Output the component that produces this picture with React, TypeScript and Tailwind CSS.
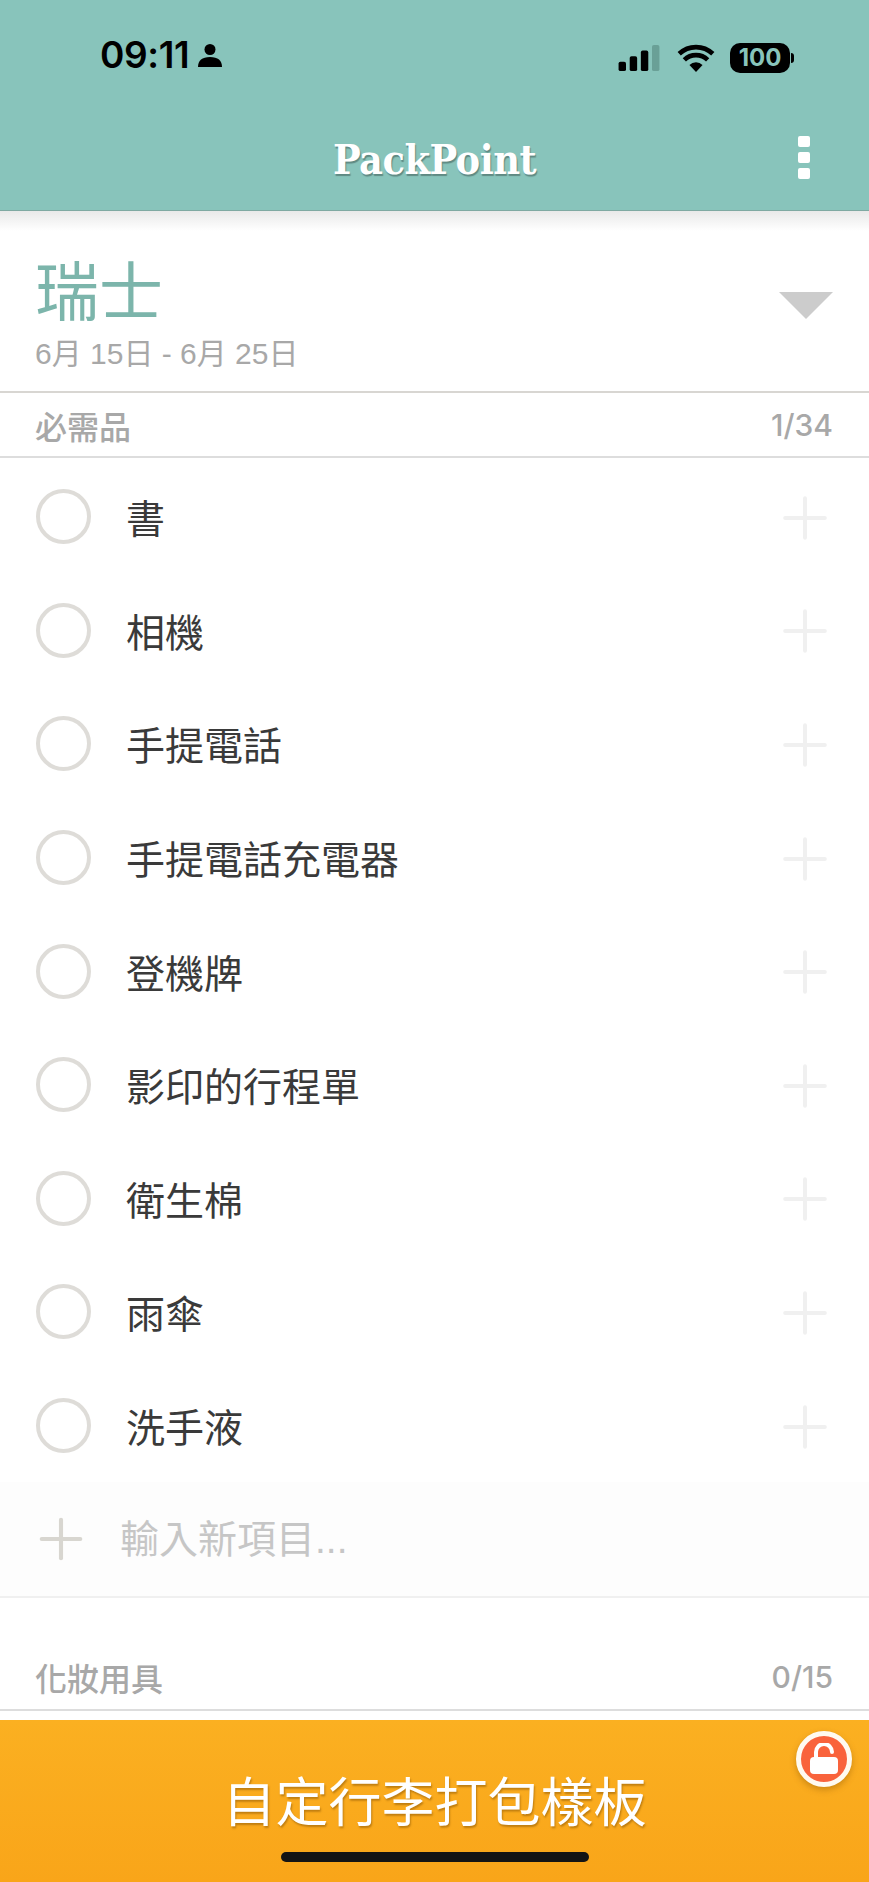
/**
 * PackPoint packing list screen.
 */
import { Plus } from 'lucide-react';

const items = ['書', '相機', '手提電話', '手提電話充電器', '登機牌', '影印的行程單', '衛生棉', '雨傘', '洗手液'];

function StatusBar() {
  return (
    <div className="flex h-[120px] items-end justify-between pb-[47px] pl-[100px] pr-[75px] text-black">
      <div className="flex items-center gap-[9px]">
        <span className="font-['Inter',sans-serif] text-[37px] font-semibold leading-none tracking-[-0.4px]">09:11</span>
        <svg width="24" height="24" viewBox="0 0 24 24" fill="currentColor">
          <circle cx="12" cy="6.500" r="5.500" />
          <path d="M0 24c0-6.500 4-10 12-10s12 3.500 12 10z" />
        </svg>
      </div>
      <div className="flex items-center">
        <svg width="46" height="26" viewBox="0 0 44 28" className="mr-[14px]">
          <rect x="0" y="18" width="8" height="10" rx="2" fill="#000" />
          <rect x="12" y="12" width="8" height="16" rx="2" fill="#000" />
          <rect x="24" y="6" width="8" height="22" rx="2" fill="#000" />
          <rect x="36" y="0" width="8" height="28" rx="2" fill="#6aa097" />
        </svg>
        <svg width="40" height="28" viewBox="0 0 40 30" className="mr-[14px]">
          <path d="M20 30 13 22.500a10 10 0 0 1 14 0z" fill="#000" />
          <path d="M7.500 17a18 18 0 0 1 25 0" fill="none" stroke="#000" strokeWidth="5" />
          <path d="M2 10.500a26 26 0 0 1 36 0" fill="none" stroke="#000" strokeWidth="5" />
        </svg>
        <div className="flex h-[30px] w-[60px] items-center justify-center rounded-[10px] bg-black font-['Inter',sans-serif] text-[24px] font-bold leading-none text-[#88c4bb]">
          100
        </div>
        <div className="ml-[1px] h-[10px] w-[3px] rounded-r-full bg-black" />
      </div>
    </div>
  );
}

function Header() {
  return (
    <header className="relative h-[211px] shrink-0 border-b border-[#7fa9a2] bg-[#88c4bb]">
      <StatusBar />
      <div className="flex items-center justify-center pt-[15px]">
        <span className="font-['DejaVu_Serif_Condensed','DejaVu_Serif',serif] text-[41px] font-bold leading-[50px] tracking-[-0.5px] text-white [font-stretch:condensed] [text-shadow:1px_2px_1px_rgba(0,0,0,0.3)]">
          PackPoint
        </span>
      </div>
      <div className="absolute right-[59px] top-[136px] flex flex-col gap-[5px]">
        <div className="h-[11px] w-[12px] rounded-[2px] bg-white" />
        <div className="h-[11px] w-[12px] rounded-[2px] bg-white" />
        <div className="h-[11px] w-[12px] rounded-[2px] bg-white" />
      </div>
    </header>
  );
}

function SectionHeader({ title, count, className }: { title: string; count: string; className: string }) {
  return (
    <div className={`flex items-center justify-between border-b-2 border-[#dddddd] pl-[35px] pr-[36px] text-[#a8a8a8] ${className}`}>
      <span className="text-[32px] font-medium leading-none">{title}</span>
      <span className="font-['Inter',sans-serif] text-[30px] font-medium leading-none">{count}</span>
    </div>
  );
}

function ItemRow({ label }: { label: string }) {
  return (
    <div className="flex h-[113.6px] items-center pl-[36px] pr-[30px]">
      <div className="h-[55px] w-[55px] shrink-0 rounded-full border-[4px] border-[#dedcd8]" />
      <span className="ml-[35px] flex-1 text-[39px] leading-none text-[#3a3a3a]">{label}</span>
      <Plus className="mt-[2px] h-[68px] w-[68px] shrink-0 text-[#f0f0f0]" strokeWidth={1.4} />
    </div>
  );
}

export default function App() {
  return (
    <div className="relative flex h-[1882px] w-[869px] flex-col overflow-hidden bg-white font-['Noto_Sans_CJK_TC',sans-serif]">
      <Header />
      <main className="flex min-h-0 flex-1 flex-col">
        <div className="h-[20px] bg-gradient-to-b from-[#e9e9e9] to-white" />
        <div className="flex h-[162px] items-start justify-between border-b-2 border-[#d8d6d2] pl-[35px] pr-[36px]">
          <div>
            <h1 className="mt-[21px] text-[64px] leading-[70px] text-[#7cb5ab]">瑞士</h1>
            <p className="mt-[14px] font-['Liberation_Sans','Noto_Sans_CJK_TC',sans-serif] text-[30px] leading-[36px] text-[#a8a8a8]">6月 15日 - 6月 25日</p>
          </div>
          <div className="mt-[61px] h-0 w-0 border-x-[27px] border-t-[27px] border-x-transparent border-t-[#cccccc]" />
        </div>
        <SectionHeader title="必需品" count="1/34" className="h-[65px]" />
        <div className="pt-[2px]">
          {items.map((item) => (
            <ItemRow key={item} label={item} />
          ))}
        </div>
        <div className="flex h-[116px] items-center border-b-2 border-[#f0f0f0] bg-[#fdfdfd] pl-[28px]">
          <Plus className="h-[66px] w-[66px] shrink-0 text-[#d8d6d0]" strokeWidth={1.5} />
          <span className="ml-[26px] font-['Liberation_Sans','Noto_Sans_CJK_TC',sans-serif] text-[39px] leading-none text-[#c6c6c6]">輸入新項目...</span>
        </div>
        <SectionHeader title="化妝用具" count="0/15" className="mt-[53px] h-[60px] pb-[7px]" />
      </main>
      <footer className="flex h-[162px] shrink-0 flex-col items-center bg-gradient-to-b from-[#fbb021] to-[#f9a519]">
        <span className="mt-[46px] text-[53px] leading-[66px] text-white [text-shadow:1px_2px_2px_rgba(120,70,0,0.45)]">
          自定行李打包樣板
        </span>
        <div className="mt-[20px] h-[10px] w-[308px] rounded-full bg-[#141414]" />
      </footer>
      <div className="absolute left-[796px] top-[1731px] flex h-[56px] w-[56px] items-center justify-center rounded-full border-[5px] border-[#fffaf0] bg-[#f9633c] shadow-[0_3px_6px_rgba(120,70,0,0.35)]">
        <svg width="30" height="32" viewBox="0 0 30 32" fill="none">
          <path d="M7 14V9a8 8 0 0 1 16 0" stroke="#fff" strokeWidth="4" strokeLinecap="round" />
          <rect x="1" y="14" width="28" height="17" rx="4" fill="#fff" />
        </svg>
      </div>
    </div>
  );
}
